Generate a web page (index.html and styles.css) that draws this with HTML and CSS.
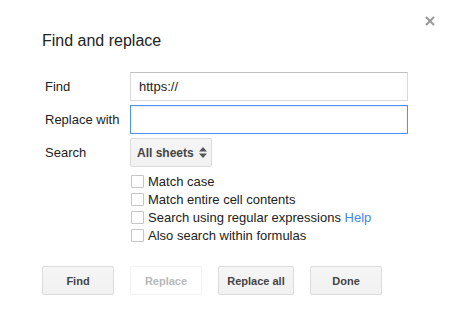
FILE: index.html
```html
<!DOCTYPE html>
<html>
<head>
<meta charset="utf-8">
<link rel="stylesheet" href="styles.css">
</head>
<body>
<div class="dialog">
  <button class="close" aria-label="Close">
    <svg width="10" height="10" viewBox="0 0 10 10"><path d="M1 1L9 9M9 1L1 9" stroke="#9a9a9a" stroke-width="2.2" fill="none"/></svg>
  </button>
  <h1 class="title">Find and replace</h1>
  <div class="form">
    <label class="lbl">Find</label>
    <div class="input">https://</div>
    <label class="lbl">Replace with</label>
    <div class="input focused"></div>
    <label class="lbl">Search</label>
    <div class="field">
      <div class="select">All sheets
        <svg class="arrows" width="8" height="11" viewBox="0 0 8 11"><path d="M4 0L8 4.5H0Z M4 11L8 6.5H0Z" fill="#555"/></svg>
      </div>
    </div>
    <div class="checks">
      <div class="check"><span class="box"></span>Match case</div>
      <div class="check"><span class="box"></span>Match entire cell contents</div>
      <div class="check"><span class="box"></span>Search using regular expressions&nbsp;<a class="help">Help</a></div>
      <div class="check"><span class="box"></span>Also search within formulas</div>
    </div>
  </div>
  <div class="buttons">
    <div class="btn">Find</div>
    <div class="btn disabled">Replace</div>
    <div class="btn wide">Replace all</div>
    <div class="btn">Done</div>
  </div>
</div>
</body>
</html>
```
FILE: styles.css
```css
html, body {
  margin: 0;
  padding: 0;
  background: #fff;
}
body {
  font-family: Arial, "Liberation Sans", sans-serif;
  color: #222;
  font-size: 13px;
}
.dialog {
  position: relative;
  width: 452px;
  height: 325px;
  box-sizing: border-box;
  padding: 31px 0 0 42px;
}
.close {
  position: absolute;
  top: 16px;
  left: 425px;
  padding: 0;
  border: 0;
  background: none;
  width: 10px;
  height: 10px;
  line-height: 0;
}
.title {
  margin: 0;
  font-size: 16px;
  font-weight: normal;
  line-height: 20px;
  color: #222;
}
.form {
  margin-top: 21px;
  display: grid;
  grid-template-columns: 88px 278px;
  grid-auto-rows: auto;
  row-gap: 4px;
}
.lbl {
  display: flex;
  align-items: center;
  padding-left: 3px;
  height: 29px;
}
.input {
  box-sizing: border-box;
  height: 29px;
  border: 1px solid #d9d9d9;
  border-top-color: #c0c0c0;
  padding: 0 8px;
  display: flex;
  align-items: center;
  color: #222;
}
.input.focused {
  border: 1px solid #4d90fe;
  box-shadow: inset 0 1px 2px rgba(0,0,0,0.1);
}
.field {
  display: flex;
}
.select {
  box-sizing: border-box;
  height: 29px;
  width: 82px;
  border: 1px solid #dcdcdc;
  border-radius: 2px;
  background: linear-gradient(#f5f5f5, #f1f1f1);
  font-size: 12px;
  font-weight: bold;
  color: #444;
  display: flex;
  align-items: center;
  padding-left: 6px;
  gap: 5px;
}
.arrows {
  flex: none;
}
.checks {
  grid-column: 2;
  margin-top: 1px;
  display: flex;
  flex-direction: column;
}
.check {
  height: 18px;
  display: flex;
  align-items: center;
  white-space: nowrap;
}
.box {
  box-sizing: border-box;
  width: 13px;
  height: 13px;
  border: 1px solid #c6c6c6;
  border-radius: 1px;
  margin-left: 1px;
  margin-right: 4px;
  background: #fff;
}
.help {
  color: #4285f4;
}
.buttons {
  margin-top: 22px;
  display: flex;
  gap: 16px;
}
.btn {
  box-sizing: border-box;
  height: 29px;
  min-width: 72px;
  padding: 0 8px;
  border: 1px solid #dcdcdc;
  border-radius: 2px;
  background: linear-gradient(#f5f5f5, #f1f1f1);
  color: #444;
  font-size: 11px;
  font-weight: bold;
  display: flex;
  align-items: center;
  justify-content: center;
}
.btn.wide {
  width: 76px;
}
.btn.disabled {
  background: #fff;
  border-color: #f3f3f3;
  color: #b8b8b8;
}
```
